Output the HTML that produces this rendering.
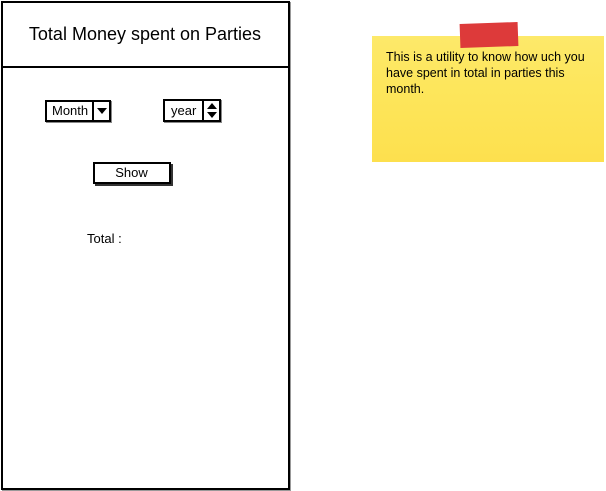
<!DOCTYPE html>
<html><head><style>
body{margin:0;width:606px;height:491px;background:#fff;position:relative;overflow:hidden;font-family:"Liberation Sans",sans-serif;color:#000}
.a{position:absolute;box-sizing:border-box}
</style></head><body>
<div class="a" style="left:1px;top:1px;width:289px;height:489px;border:2px solid #000;box-shadow:1px 1px 0 #999"></div>
<div class="a" style="left:1px;top:66px;width:289px;height:2px;background:#000"></div>
<div class="a" style="left:0;top:24px;width:290px;text-align:center;font-size:18px">Total Money spent on Parties</div>

<div class="a" style="left:45px;top:100px;width:66px;height:22px;border:2px solid #000;box-shadow:1px 1px 0 #888"></div>
<div class="a" style="left:52px;top:103px;font-size:13px">Month</div>
<div class="a" style="left:92px;top:100px;width:2px;height:22px;background:#000"></div>
<svg class="a" style="left:95px;top:106px" width="14" height="10"><path d="M2 2 L12 2 L7 8 Z" fill="#000"/></svg>

<div class="a" style="left:163px;top:99px;width:58px;height:23px;border:2px solid #000;box-shadow:1px 1px 0 #888"></div>
<div class="a" style="left:171px;top:103px;font-size:13px">year</div>
<div class="a" style="left:202px;top:99px;width:2px;height:23px;background:#000"></div>
<svg class="a" style="left:205px;top:101px" width="14" height="20"><path d="M2 8 L7 2 L12 8 Z M2 11 L12 11 L7 17 Z" fill="#000"/></svg>

<div class="a" style="left:93px;top:162px;width:78px;height:22px;border:2px solid #000;box-shadow:2px 2px 0 #333"></div>
<div class="a" style="left:93px;top:165px;width:77px;text-align:center;font-size:13px">Show</div>

<div class="a" style="left:87px;top:231px;font-size:13px">Total :</div>

<div class="a" style="left:372px;top:36px;width:232px;height:126px;background:linear-gradient(180deg,#fde96a 0%,#fde65c 40%,#fde04e 100%)"></div>
<div class="a" style="left:460px;top:23px;width:58px;height:24px;background:#dd3a3a;transform:rotate(-2deg)"></div>
<div class="a" style="left:386px;top:49px;width:212px;font-size:12.5px;line-height:16px">This is a utility to know how uch you have spent in total in parties this month.</div>
</body></html>
